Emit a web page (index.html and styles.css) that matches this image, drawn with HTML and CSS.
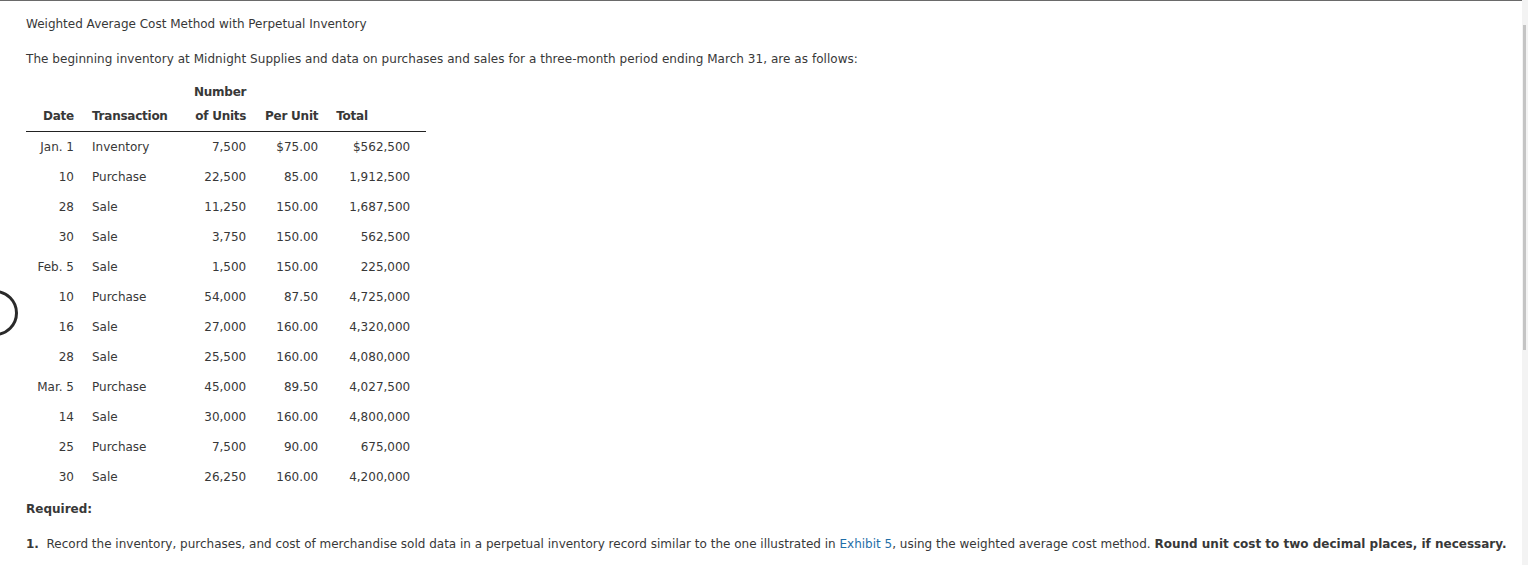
FILE: index.html
```html
<!DOCTYPE html>
<html>
<head>
<meta charset="utf-8">
<link rel="stylesheet" href="styles.css">
</head>
<body>
<div class="page">
  <p class="title">Weighted Average Cost Method with Perpetual Inventory</p>
  <p class="intro">The beginning inventory at Midnight Supplies and data on purchases and sales for a three-month period ending March 31, are as follows:</p>
  <table class="inv">
    <thead>
      <tr class="h1"><th></th><th></th><th class="num-h">Number</th><th></th><th></th></tr>
      <tr class="h2"><th class="c1">Date</th><th class="c2">Transaction</th><th class="c3">of Units</th><th class="c4">Per Unit</th><th class="c5h">Total</th></tr>
    </thead>
    <tbody>
      <tr><td class="c1">Jan. 1</td><td class="c2">Inventory</td><td class="c3">7,500</td><td class="c4">$75.00</td><td class="c5">$562,500</td></tr>
      <tr><td class="c1">10</td><td class="c2">Purchase</td><td class="c3">22,500</td><td class="c4">85.00</td><td class="c5">1,912,500</td></tr>
      <tr><td class="c1">28</td><td class="c2">Sale</td><td class="c3">11,250</td><td class="c4">150.00</td><td class="c5">1,687,500</td></tr>
      <tr><td class="c1">30</td><td class="c2">Sale</td><td class="c3">3,750</td><td class="c4">150.00</td><td class="c5">562,500</td></tr>
      <tr><td class="c1">Feb. 5</td><td class="c2">Sale</td><td class="c3">1,500</td><td class="c4">150.00</td><td class="c5">225,000</td></tr>
      <tr><td class="c1">10</td><td class="c2">Purchase</td><td class="c3">54,000</td><td class="c4">87.50</td><td class="c5">4,725,000</td></tr>
      <tr><td class="c1">16</td><td class="c2">Sale</td><td class="c3">27,000</td><td class="c4">160.00</td><td class="c5">4,320,000</td></tr>
      <tr><td class="c1">28</td><td class="c2">Sale</td><td class="c3">25,500</td><td class="c4">160.00</td><td class="c5">4,080,000</td></tr>
      <tr><td class="c1">Mar. 5</td><td class="c2">Purchase</td><td class="c3">45,000</td><td class="c4">89.50</td><td class="c5">4,027,500</td></tr>
      <tr><td class="c1">14</td><td class="c2">Sale</td><td class="c3">30,000</td><td class="c4">160.00</td><td class="c5">4,800,000</td></tr>
      <tr><td class="c1">25</td><td class="c2">Purchase</td><td class="c3">7,500</td><td class="c4">90.00</td><td class="c5">675,000</td></tr>
      <tr><td class="c1">30</td><td class="c2">Sale</td><td class="c3">26,250</td><td class="c4">160.00</td><td class="c5">4,200,000</td></tr>
    </tbody>
  </table>
  <p class="req">Required:</p>
  <p class="item"><b>1.</b>&nbsp; Record the inventory, purchases, and cost of merchandise sold data in a perpetual inventory record similar to the one illustrated in <a class="link">Exhibit 5</a>, using the weighted average cost method. <b>Round unit cost to two decimal places, if necessary.</b></p>
</div>
<div class="ring"></div>
<div class="scroll"><div class="thumb"></div></div>
</body>
</html>
```
FILE: styles.css
```css
html, body {
  margin: 0;
  padding: 0;
  background: #fff;
}
body {
  font-family: "DejaVu Sans", Verdana, sans-serif;
  font-size: 12px;
  color: #383838;
  border-top: 1px solid #6a6a6a;
  margin-right: 6px;
  height: 564px;
  overflow: hidden;
}
.page {
  padding: 0 0 0 26px;
}
p { margin: 0; }
.title {
  padding-top: 15px;
  line-height: 16px;
}
.intro {
  margin-top: 19px;
  line-height: 16px;
  letter-spacing: 0.045px;
}
.inv {
  border-collapse: collapse;
  margin-top: 17px;
}
.inv th {
  font-weight: bold;
  padding: 0;
  line-height: 16px;
  letter-spacing: -0.25px;
}
.h1 th { height: 16px; }
.h2 th { padding-top: 8px; padding-bottom: 7px; }
.h2 { border-bottom: 1px solid #222; }
.num-h { text-align: left; padding-left: 8px !important; }
.inv td {
  padding: 0;
  height: 30px;
  line-height: 16px;
}
.c1 { width: 48px; text-align: right; padding-right: 18px !important; }
.c2 { width: 94px; text-align: left; }
.c3 { width: 60px; text-align: right; }
.c4 { width: 72px; text-align: right; }
.c5 { width: 92px; text-align: right; padding-right: 16px !important; }
.c5h { text-align: left; padding-left: 18px !important; padding-right: 16px !important; }
.req {
  margin-top: 9px;
  font-weight: bold;
  line-height: 16px;
}
.item {
  margin-top: 19px;
  line-height: 16px;
  white-space: nowrap;
}
.link { color: #1f6ea8; text-decoration: none; }
.ring {
  position: absolute;
  left: -28px;
  top: 290px;
  width: 46px;
  height: 46px;
  border: 3px solid #2a2a2a;
  border-radius: 50%;
  box-sizing: border-box;
}
.scroll {
  position: fixed;
  top: 0;
  right: 0;
  width: 6px;
  height: 565px;
  background: #f3f3f3;
}
.thumb {
  position: absolute;
  top: 25px;
  left: 1px;
  width: 3px;
  height: 325px;
  background: #c4c4c4;
}
```
